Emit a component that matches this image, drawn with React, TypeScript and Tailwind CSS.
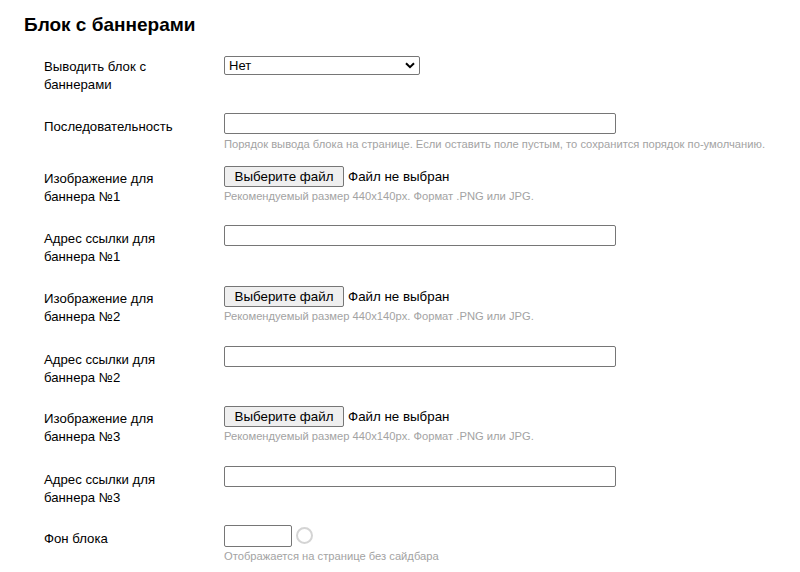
import React from "react";

const Hint = ({ children, mt = "mt-[2px]" }: { children: React.ReactNode; mt?: string }) => (
  <div className={`${mt} text-[11.2px] leading-[14px] text-[#a3a3a3] whitespace-nowrap`}>{children}</div>
);

const TextInput = () => (
  <input type="text" className="block w-[392px] h-[21px] border border-[#767676] rounded-[2px] bg-white px-[2px] text-[13px] outline-none" />
);

const FileInput = () => (
  <div className="flex items-center h-[21px]">
    <button className="h-[21px] w-[120px] border border-[#767676] rounded-[2px] bg-[#efefef] text-[13.33px] leading-[19px] text-black px-[6px] whitespace-nowrap">
      Выберите файл
    </button>
    <span className="ml-[4px] text-[13.33px] text-black whitespace-nowrap">Файл не выбран</span>
  </div>
);

const Row = ({
  label,
  h,
  pt,
  children,
}: {
  label: React.ReactNode;
  h: string;
  pt: string;
  children: React.ReactNode;
}) => (
  <div className={`flex items-start ${h}`}>
    <div className={`w-[180px] pr-[40px] ${pt} text-[13.2px] leading-[18px] text-black`}>{label}</div>
    <div>{children}</div>
  </div>
);

export default function App() {
  return (
    <div
      className="w-[800px] h-[572px] bg-white overflow-hidden pl-[24px] pt-[13px]"
      style={{ fontFamily: '"Liberation Sans", Arial, sans-serif' }}
    >
      <h2 className="text-[19px] leading-[23px] font-bold text-black">Блок с баннерами</h2>
      <div className="mt-[20px] pl-[20px]">
        <Row label="Выводить блок с баннерами" h="h-[57px]" pt="pt-[2px]">
          <div className="relative w-[196px] h-[19px] border border-[#767676] rounded-[2px] bg-white">
            <span className="absolute left-[4px] top-0 text-[13px] leading-[17px]">Нет</span>
            <svg className="absolute right-[4px] top-[5px]" width="10" height="7" viewBox="0 0 10 7">
              <path d="M1 1.2 L5 5.2 L9 1.2" fill="none" stroke="#000" strokeWidth="2" />
            </svg>
          </div>
        </Row>
        <Row label="Последовательность" h="h-[53px]" pt="pt-[5px]">
          <TextInput />
          <Hint mt="mt-[3px]">
            Порядок вывода блока на странице. Если оставить поле пустым, то сохранится порядок по-умолчанию.
          </Hint>
        </Row>
        <Row label="Изображение для баннера №1" h="h-[59px]" pt="pt-[4px]">
          <FileInput />
          <Hint>Рекомендуемый размер 440x140px. Формат .PNG или JPG.</Hint>
        </Row>
        <Row label="Адрес ссылки для баннера №1" h="h-[61px]" pt="pt-[5px]">
          <TextInput />
        </Row>
        <Row label="Изображение для баннера №2" h="h-[60px]" pt="pt-[4px]">
          <FileInput />
          <Hint>Рекомендуемый размер 440x140px. Формат .PNG или JPG.</Hint>
        </Row>
        <Row label="Адрес ссылки для баннера №2" h="h-[60px]" pt="pt-[5px]">
          <TextInput />
        </Row>
        <Row label="Изображение для баннера №3" h="h-[60px]" pt="pt-[4px]">
          <FileInput />
          <Hint>Рекомендуемый размер 440x140px. Формат .PNG или JPG.</Hint>
        </Row>
        <Row label="Адрес ссылки для баннера №3" h="h-[59px]" pt="pt-[5px]">
          <TextInput />
        </Row>
        <Row label="Фон блока" h="h-[47px]" pt="pt-[5px]">
          <div className="flex items-center">
            <input type="text" className="block w-[68px] h-[22px] border border-[#767676] rounded-[2px] bg-white outline-none" />
            <span className="ml-[4px] -mt-[2px] w-[17px] h-[17px] rounded-full border-2 border-[#d4d4d4] bg-white" />
          </div>
          <Hint>Отображается на странице без сайдбара</Hint>
        </Row>
      </div>
    </div>
  );
}
